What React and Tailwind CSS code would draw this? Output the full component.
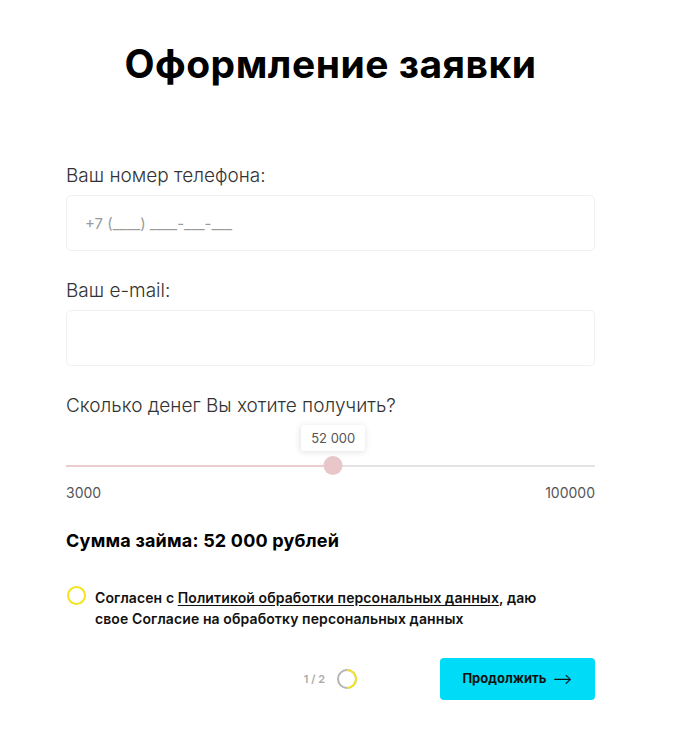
import { useState } from 'react'

const MIN = 3000
const MAX = 100000

// Поле формы с подписью сверху
function Field({ label, placeholder }) {
  return (
    <div>
      <label className="block text-[19px] font-light leading-[24px] text-[#333]">{label}</label>
      <input
        type="text"
        placeholder={placeholder}
        className="mt-[7px] block h-[56px] w-full rounded-[5px] border border-[#f0f0f0] bg-white px-[18px] text-[15px] text-[#333] outline-none placeholder:text-[#9a9a9a]"
      />
    </div>
  )
}

function fmt(n) {
  return String(n).replace(/\B(?=(\d{3})+(?!\d))/g, ' ')
}

export default function App() {
  const [amount] = useState(52000)
  const [agree, setAgree] = useState(false)
  const pct = ((amount - MIN) / (MAX - MIN)) * 100

  return (
    <div className="min-h-[750px] bg-white font-['Inter','Noto_Sans',sans-serif] text-black">
      <div className="ml-[66px] w-[529px] pt-[40px]">
        <h1 className="text-center text-[39px] font-bold leading-[48px] tracking-[0.5px]">Оформление заявки</h1>

        <div className="mt-[76px] space-y-[28px]">
          <Field label="Ваш номер телефона:" placeholder="+7 (____) ____-___-___" />
          <Field label="Ваш e-mail:" placeholder="" />
        </div>

        {/* Ползунок суммы */}
        <div className="mt-[28px]">
          <div className="text-[19px] font-light leading-[24px] text-[#333]">Сколько денег Вы хотите получить?</div>
          <div className="relative mt-[38px] h-[20px]">
            <div className="absolute left-0 right-0 top-[9px] h-[2px] bg-[#e6e3e3]" />
            <div className="absolute left-0 top-[9px] h-[2px] bg-[#ebcdd0]" style={{ width: pct + '%' }} />
            <div
              className="absolute top-0 h-[19px] w-[19px] -translate-x-1/2 rounded-full bg-[#e9c6ca]"
              style={{ left: pct + '%' }}
            />
            <div
              className="absolute bottom-[25px] -translate-x-1/2 whitespace-nowrap rounded-[3px] bg-white px-[10px] py-[4px] text-[13px] leading-[18px] text-[#555] shadow-[0_1px_6px_rgba(0,0,0,0.12)]"
              style={{ left: pct + '%' }}
            >
              {fmt(amount)}
            </div>
          </div>
          <div className="mt-[8px] flex justify-between text-[14px] leading-[18px] text-[#555]">
            <span>{MIN}</span>
            <span>{MAX}</span>
          </div>
        </div>

        <div className="mt-[27px] text-[18px] font-bold leading-[24px] tracking-[0.2px]">
          Сумма займа: {fmt(amount)} рублей
        </div>

        {/* Согласие */}
        <label className="mt-[34px] flex cursor-pointer items-start gap-[9px]" onClick={() => setAgree(!agree)}>
          <span
            className={`ml-[1px] mt-[-1px] h-[19px] w-[19px] shrink-0 rounded-full border-2 border-[#f3e41c] ${agree ? 'bg-[#f3e41c]' : ''}`}
          />
          <span className="text-[14px] font-semibold leading-[21px] tracking-[0.1px] text-[#111]">
            Согласен с <span className="underline underline-offset-2">Политикой обработки персональных данных</span>, даю
            <br />
            свое Согласие на обработку персональных данных
          </span>
        </label>

        {/* Низ: шаг и кнопка */}
        <div className="mt-[29px] flex items-center justify-end">
          <span className="text-[11px] font-semibold text-[#aaa]">1 / 2</span>
          <svg width="22" height="22" viewBox="0 0 22 22" className="ml-[11px]">
            <circle cx="11" cy="11" r="9" fill="none" stroke="#b5b5b5" strokeWidth="2" />
            <path d="M11 2 A9 9 0 0 1 11 20" fill="none" stroke="#f3e41c" strokeWidth="2" />
          </svg>
          <button
            type="button"
            className="ml-[82px] flex h-[42px] w-[155px] items-center justify-center gap-[6px] rounded-[4px] bg-[#00dbf8] text-[13px] font-bold text-[#111]"
          >
            Продолжить <span className="text-[15px] font-normal">⟶</span>
          </button>
        </div>
      </div>
    </div>
  )
}
